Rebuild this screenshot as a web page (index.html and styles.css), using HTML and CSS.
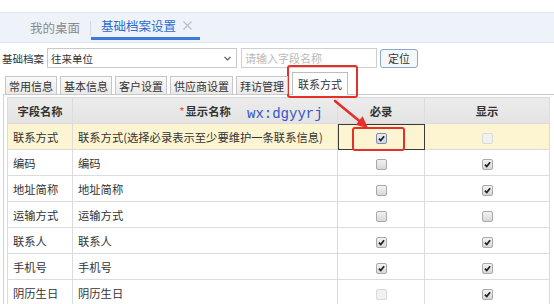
FILE: index.html
```html
<!DOCTYPE html>
<html lang="zh-CN">
<head>
<meta charset="utf-8">
<title>基础档案设置</title>
<link rel="stylesheet" href="styles.css">
</head>
<body>
<div class="strip"></div>
<div class="tabbar">
  <div class="tab-home">我的桌面</div>
  <div class="tab-sep"></div>
  <div class="tab-active">基础档案设置<svg class="close" width="9" height="9" viewBox="0 0 9 9"><path d="M0.5 0.5 L8.5 8.5 M8.5 0.5 L0.5 8.5" stroke="#b9bec6" stroke-width="1.1" fill="none"/></svg></div>
</div>
<div class="filter">
  <span class="label">基础档案</span>
  <div class="select"><span>往来单位</span><svg width="7" height="5" viewBox="0 0 7 5"><path d="M0.5 0.8 L3.5 3.8 L6.5 0.8" stroke="#555" stroke-width="1.2" fill="none"/></svg></div>
  <div class="input">请输入字段名称</div>
  <div class="btn">定位</div>
</div>
<div class="subtabs">
  <div class="stab">常用信息</div>
  <div class="stab">基本信息</div>
  <div class="stab">客户设置</div>
  <div class="stab">供应商设置</div>
  <div class="stab">拜访管理</div>
  <div class="stab active">联系方式</div>
</div>
<div class="panel">
  <table class="grid">
    <colgroup><col class="c1"><col class="c2"><col class="c3"><col class="c4"></colgroup>
    <thead>
      <tr><th>字段名称</th><th><span class="req">*</span>显示名称</th><th>必录</th><th>显示</th></tr>
    </thead>
    <tbody>
      <tr class="sel"><td>联系方式</td><td>联系方式(选择必录表示至少要维护一条联系信息)</td><td class="cell-focus"><span class="cb on focus"><svg viewBox="0 0 10 10"><path d="M2.2 5.2 L4.2 7.3 L7.9 2.6" /></svg></span></td><td><span class="cb dis"></span></td></tr>
      <tr><td>编码</td><td>编码</td><td><span class="cb"></span></td><td><span class="cb on"><svg viewBox="0 0 10 10"><path d="M2.2 5.2 L4.2 7.3 L7.9 2.6" /></svg></span></td></tr>
      <tr><td>地址简称</td><td>地址简称</td><td><span class="cb"></span></td><td><span class="cb on"><svg viewBox="0 0 10 10"><path d="M2.2 5.2 L4.2 7.3 L7.9 2.6" /></svg></span></td></tr>
      <tr><td>运输方式</td><td>运输方式</td><td><span class="cb"></span></td><td><span class="cb"></span></td></tr>
      <tr><td>联系人</td><td>联系人</td><td><span class="cb on"><svg viewBox="0 0 10 10"><path d="M2.2 5.2 L4.2 7.3 L7.9 2.6" /></svg></span></td><td><span class="cb on"><svg viewBox="0 0 10 10"><path d="M2.2 5.2 L4.2 7.3 L7.9 2.6" /></svg></span></td></tr>
      <tr><td>手机号</td><td>手机号</td><td><span class="cb on"><svg viewBox="0 0 10 10"><path d="M2.2 5.2 L4.2 7.3 L7.9 2.6" /></svg></span></td><td><span class="cb on"><svg viewBox="0 0 10 10"><path d="M2.2 5.2 L4.2 7.3 L7.9 2.6" /></svg></span></td></tr>
      <tr><td>阴历生日</td><td>阴历生日</td><td><span class="cb dis"></span></td><td><span class="cb on"><svg viewBox="0 0 10 10"><path d="M2.2 5.2 L4.2 7.3 L7.9 2.6" /></svg></span></td></tr>
    </tbody>
  </table>
</div>
<div class="wx">wx:dgyyrj</div>
<div class="mark mark-tab"></div>
<div class="mark mark-cb"></div>
<svg class="arrow" width="554" height="304" viewBox="0 0 554 304">
  <path d="M335 101 L360 121.5" stroke="#e5302a" stroke-width="2.6" stroke-linecap="round" fill="none"/>
  <polygon points="368,128 355.6,124.9 362.6,116.3" fill="#e5302a"/>
</svg>
</body>
</html>
```
FILE: styles.css
```css
* { box-sizing: border-box; }
html, body { margin: 0; padding: 0; }
body {
  width: 554px;
  height: 304px;
  overflow: hidden;
  position: relative;
  background: #fff;
  color: #333;
  font-family: "Noto Sans CJK SC", "Noto Sans", sans-serif;
}
.strip { height: 12px; }
.tabbar {
  height: 31px;
  border-top: 1px solid #e2e7ee;
  border-bottom: 1px solid #dde3ea;
  background: #eef3f9;
  display: flex;
  padding-left: 30px;
  font-size: 12.5px;
}
.tab-home {
  color: #8a8a8a;
  display: flex;
  align-items: center;
  padding-right: 10px;
}
.tab-sep {
  width: 1px;
  background: #d2d8e0;
  margin: 8px 0 7px;
}
.tab-active {
  display: flex;
  align-items: center;
  padding: 0 8px 0 10px;
  color: #2d6ad0;
  border-bottom: 3px solid #3d79dc;
  margin-bottom: 2px;
}
.close { margin-left: 7px; }
.filter {
  display: flex;
  align-items: center;
  height: 20px;
  margin-top: 5px;
  padding-left: 2px;
  font-size: 10.5px;
}
.label { width: 45px; color: #333; }
.select {
  width: 190px;
  height: 20px;
  border: 1px solid #c9c9c9;
  display: flex;
  align-items: center;
  justify-content: space-between;
  padding: 0 5px 0 3px;
}
.input {
  width: 136px;
  height: 20px;
  margin-left: 4px;
  border: 1px solid #cfcfcf;
  color: #b9b9b9;
  font-size: 11px;
  padding-left: 3px;
  display: flex;
  align-items: center;
}
.btn {
  width: 38px;
  height: 19px;
  margin-left: 3px;
  border: 1px solid #86aac8;
  border-radius: 3px;
  background: #f4f8fb;
  font-size: 11px;
  display: flex;
  align-items: center;
  justify-content: center;
}
.subtabs {
  display: flex;
  align-items: flex-end;
  gap: 3px;
  height: 22px;
  margin-top: 4px;
  padding-left: 5px;
  position: relative;
  z-index: 1;
  font-size: 11px;
}
.stab {
  height: 18px;
  padding: 0 3px;
  border: 1px solid #c6c6c6;
  border-bottom: none;
  background: linear-gradient(#fafafa, #e9e9e9);
  display: flex;
  align-items: center;
  color: #333;
}
.stab.active {
  height: 23px;
  margin-bottom: -1px;
  margin-left: 1px;
  padding: 0 5px;
  background: #fff;
  border-color: #bdbdbd;
}
.panel {
  margin-left: 3px;
  height: 220px;
  border-top: 1px solid #c9c9c9;
  border-left: 1px solid #d3d3d3;
  padding: 2px 0 0 3px;
}
.grid {
  border-collapse: collapse;
  table-layout: fixed;
  width: 542px;
  font-size: 11.3px;
}
.c1 { width: 65px; }
.c2 { width: 265px; }
.c3 { width: 87px; }
.c4 { width: 125px; }
.grid th, .grid td {
  border: 1px solid #dcdcdc;
  height: 26px;
  padding: 0 0 0 5px;
  white-space: nowrap;
  overflow: hidden;
}
.grid th {
  background: linear-gradient(#ececec, #e3e3e3);
  font-weight: bold;
  text-align: center;
  padding: 0;
  color: #333;
}
.grid td:nth-child(3), .grid td:nth-child(4) {
  text-align: center;
  padding: 0;
}
.req { color: #e44; font-weight: normal; margin-right: 1px; }
.sel td { background: #fdf4d2; }
.grid td.cell-focus { outline: 1px solid #3a3a3a; outline-offset: -1px; }
.cb {
  display: inline-block;
  width: 11px;
  height: 11px;
  border: 1px solid #a9a9a9;
  border-radius: 2px;
  background: linear-gradient(#f2f2f2, #d8d8d8);
  vertical-align: middle;
  position: relative;
}
.cb svg {
  position: absolute;
  left: 0;
  top: 0;
  width: 9px;
  height: 9px;
}
.cb svg path { stroke: #1e1e1e; stroke-width: 1.9; fill: none; }
.cb.focus { border-color: #7d8fae; background: linear-gradient(#e9edf3, #cfd6e0); }
.cb.dis { border-color: #dadada; background: #f1f1f1; }
.wx {
  position: absolute;
  left: 247px;
  top: 106px;
  font-family: "Liberation Mono", monospace;
  font-size: 14px;
  line-height: 16px;
  color: #3454c6;
}
.mark {
  position: absolute;
  border: 2px solid #e5302a;
  border-radius: 3px;
}
.mark-tab { left: 287px; top: 65px; width: 71px; height: 33px; }
.mark-cb { left: 352px; top: 127px; width: 53px; height: 24px; }
.arrow { position: absolute; left: 0; top: 0; pointer-events: none; }
```
